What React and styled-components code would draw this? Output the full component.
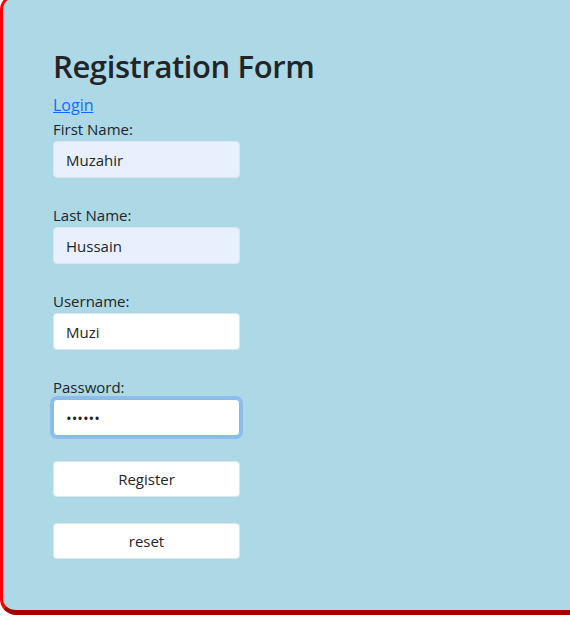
import React from "react";
import styled, { createGlobalStyle } from "styled-components";

const GlobalStyle = createGlobalStyle`
  html, body {
    margin: 0;
    padding: 0;
    background: #ffffff;
    overflow: hidden;
  }
  body {
    font-family: "Open Sans", "Noto Sans", sans-serif;
    color: #212529;
  }
`;

const fields = [
  { label: "First Name:", value: "Muzahir", autofill: true },
  { label: "Last Name:", value: "Hussain", autofill: true },
  { label: "Username:", value: "Muzi" },
  { label: "Password:", value: "123456", type: "password", focused: true },
];

const App = () => {
  return (
    <>
      <GlobalStyle />
      <Panel>
        <Title>Registration Form</Title>
        <LoginLink href="#">Login</LoginLink>
        <Form onSubmit={(e) => e.preventDefault()}>
          {fields.map((f) => (
            <Field key={f.label}>
              <Label>{f.label}</Label>
              <Input
                type={f.type || "text"}
                defaultValue={f.value}
                $autofill={f.autofill}
                $focused={f.focused}
                autoFocus={f.focused}
              />
            </Field>
          ))}
          <Button type="submit">Register</Button>
          <Button type="reset">reset</Button>
        </Form>
      </Panel>
    </>
  );
};

// 파란 배경 카드
const Panel = styled.div`
  box-sizing: border-box;
  width: 640px;
  height: 621px;
  margin-top: -6px;
  padding: 51px 50px 0;
  background: #add8e6;
  border-top: 3px solid #ff0000;
  border-left: 3px solid #ff0000;
  border-bottom: 5px solid #a50000;
  border-radius: 16px;
`;
const Title = styled.h2`
  margin: 0 0 8px;
  font-size: 31px;
  font-weight: 600;
  line-height: 1.2;
  letter-spacing: -0.4px;
  color: #212529;
`;
const LoginLink = styled.a`
  display: block;
  width: fit-content;
  font-size: 16px;
  line-height: 24px;
  color: #0d6efd;
  text-decoration: underline;
`;
const Form = styled.form`
  display: flex;
  flex-direction: column;
  align-items: flex-start;
  gap: 25px;
`;
const Field = styled.div`
  display: flex;
  flex-direction: column;
`;
const Label = styled.label`
  font-size: 15px;
  line-height: 24px;
`;
const Input = styled.input`
  box-sizing: border-box;
  width: 187px;
  height: 37px;
  padding: 0 12px;
  font-family: inherit;
  font-size: 15px;
  color: #212529;
  background: ${(p) => (p.$autofill ? "#e8f0fe" : "#ffffff")};
  border: 1px solid ${(p) => (p.$focused ? "#86b7fe" : "#dbe6ee")};
  border-radius: 4px;
  outline: none;
  box-shadow: ${(p) => (p.$focused ? "0 0 0 3px #8cbdea" : "none")};
  caret-color: #000;
`;
const Button = styled.button`
  box-sizing: border-box;
  width: 187px;
  height: 36px;
  margin-bottom: 1px;
  font-family: inherit;
  font-size: 15px;
  color: #212529;
  background: #ffffff;
  border: 1px solid #dbe6ee;
  border-radius: 4px;
  cursor: pointer;
`;

export default App;
